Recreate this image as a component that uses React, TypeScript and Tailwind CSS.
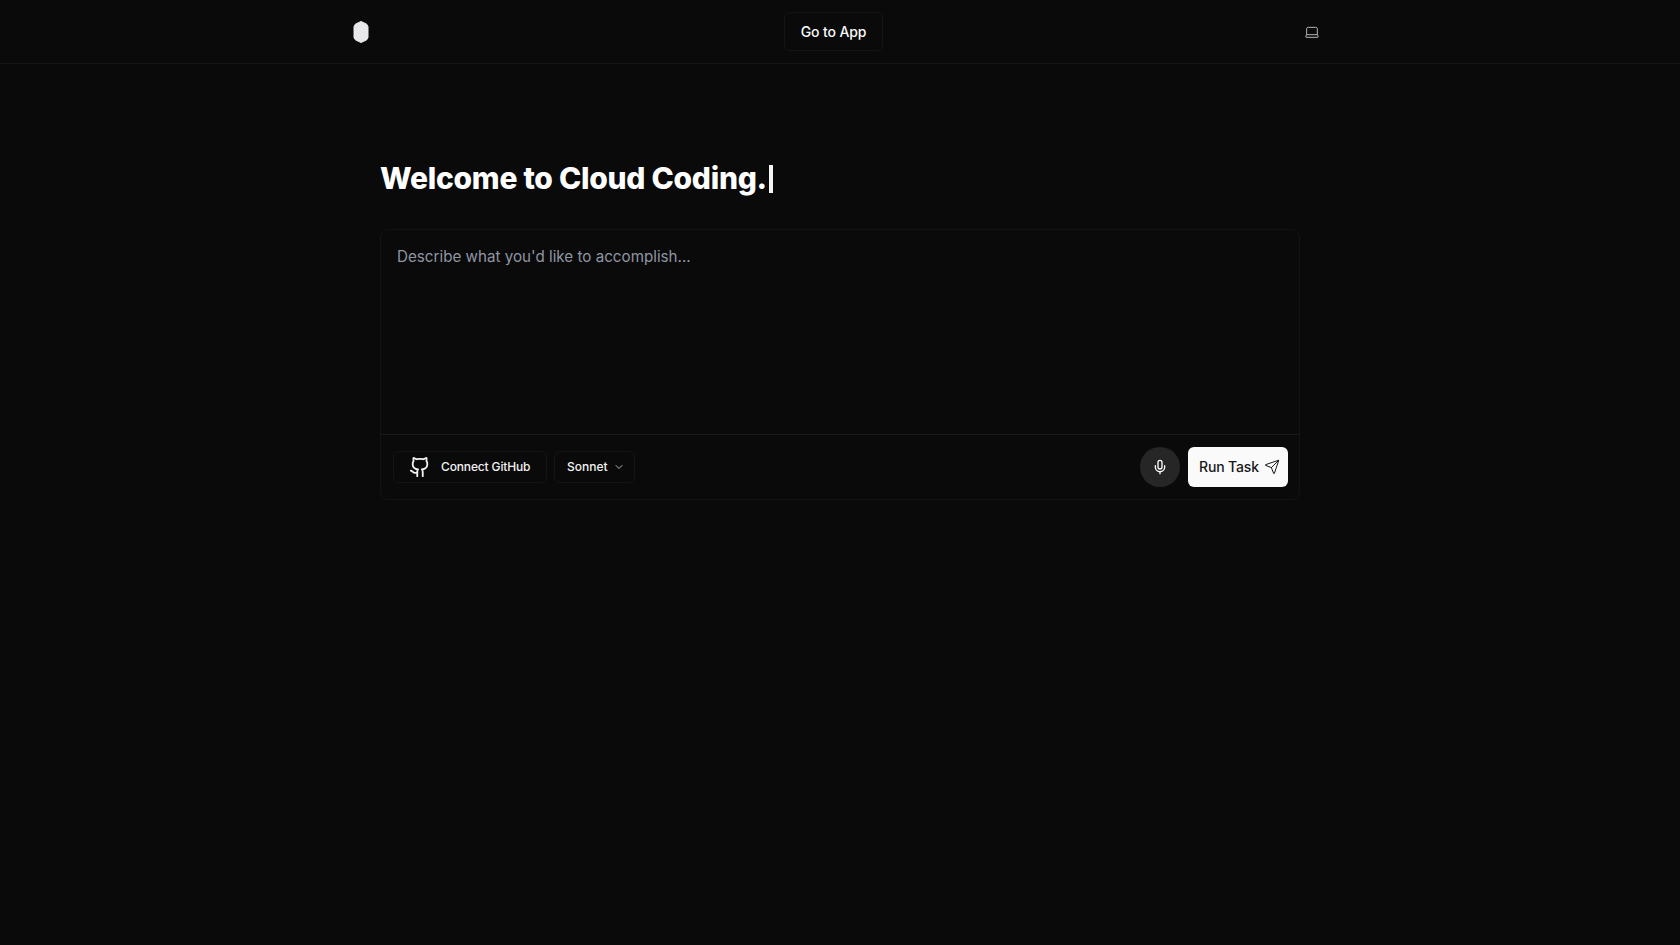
import { ChevronDown, Github, Laptop, Mic, Send } from "lucide-react"

export default function App() {
  return (
    <div className="min-h-[945px] bg-[#0a0a0a] font-['Inter',sans-serif] text-white">
      {/* Header */}
      <header className="h-16 border-b border-[#161616]">
        <div className="mx-auto flex h-[63px] w-[976px] items-center">
          <div className="ml-[-9px] flex h-9 w-9 items-center justify-center">
            <svg viewBox="0 0 16 24" className="h-6 w-4 blur-[0.4px]">
              <path d="M8 1.5 13.5 4 15 6.5V17.5L13.5 20 8 22.5 2.5 20 1 17.5V6.5L2.5 4Z" fill="#e8e8ea" stroke="#e8e8ea" strokeLinejoin="round" />
            </svg>
          </div>
          <button className="ml-[405px] flex h-[39px] w-[99px] items-center justify-center rounded-md border border-[#151515] text-sm font-medium tracking-[-0.01em] text-[#fafafa]">
            Go to App
          </button>
          <div className="mr-[-2px] ml-auto flex h-9 w-9 items-center justify-center">
            <Laptop className="h-4 w-4 text-[#b5b5b5]" strokeWidth={1.5} />
          </div>
        </div>
      </header>

      <main className="mx-auto w-[920px] pt-[96px]">
        <h1 className="h-[69px] text-[30px] leading-9 font-extrabold tracking-[-0.009em] text-white">
          Welcome to Cloud Coding.<span className="ml-[2px] inline-block h-[28px] w-1 translate-y-[4px] bg-[#f5f5f5]" />
        </h1>

        <div className="rounded-lg border border-[#131313]">
          <div className="h-[204px] px-4 pt-[15px] text-[15.2px] leading-6 text-[#8f96a3]">
            Describe what you'd like to accomplish...
          </div>
          <div className="flex h-[65px] items-center rounded-b-lg border-t border-[#1a1a1a] pr-[11px] pl-3">
            <button className="flex h-8 w-[154px] items-center rounded-md border border-[#151515] pl-[15px] text-xs font-medium tracking-[-0.012em] text-[#f2f2f2]">
              <Github className="h-[22px] w-[22px]" strokeWidth={2} />
              <span className="ml-[10px]">Connect GitHub</span>
            </button>
            <button className="ml-[7px] flex h-8 w-[81px] items-center rounded-md border border-[#151515] pl-3 text-xs font-medium text-[#f2f2f2]">
              Sonnet
              <ChevronDown className="ml-[5px] h-3 w-3 text-[#b5b5b5]" />
            </button>
            <button className="ml-auto flex h-10 w-10 items-center justify-center rounded-full bg-[#262626]">
              <Mic className="h-4 w-4 text-white" />
            </button>
            <button className="ml-2 flex h-10 w-[100px] items-center justify-between rounded-md bg-[#fafafa] pr-2 pl-[11px] text-sm font-medium tracking-[-0.01em] text-[#171717]">
              Run Task
              <Send className="h-4 w-4" strokeWidth={1.5} />
            </button>
          </div>
        </div>
      </main>
    </div>
  )
}
